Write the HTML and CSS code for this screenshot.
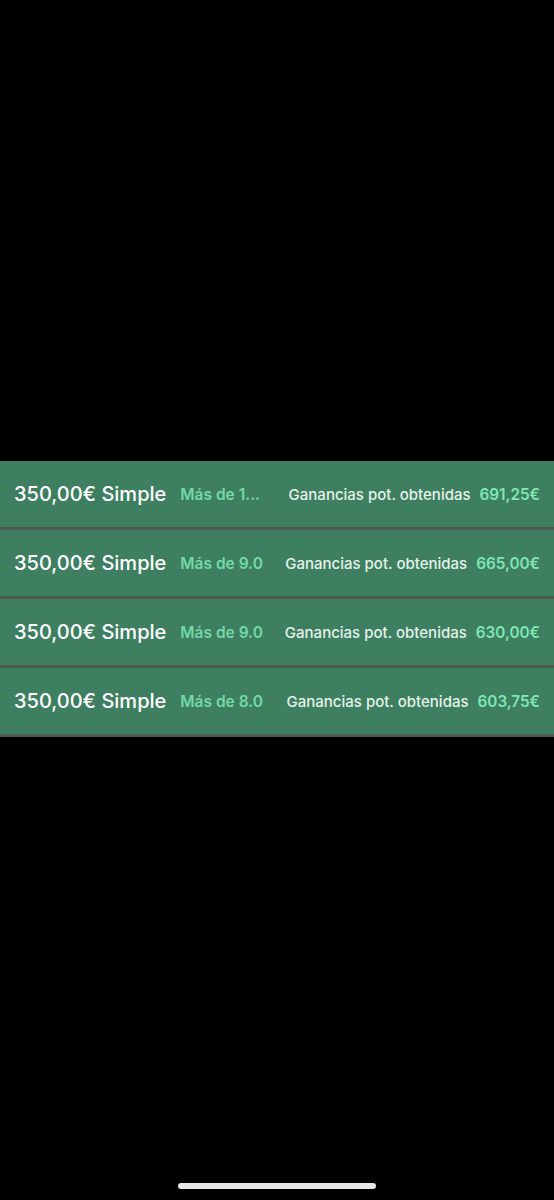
FILE: index.html
```html
<!DOCTYPE html>
<html>
<head>
<meta charset="utf-8">
<link rel="stylesheet" href="styles.css">
</head>
<body>
<div class="screen">
  <div class="list">
    <div class="row">
      <div class="left"><span class="stake">350,00€ Simple</span><span class="sel">Más de 1...</span></div>
      <div class="right"><span class="label">Ganancias pot. obtenidas</span><span class="val">691,25€</span></div>
    </div>
    <div class="row">
      <div class="left"><span class="stake">350,00€ Simple</span><span class="sel">Más de 9.0</span></div>
      <div class="right"><span class="label">Ganancias pot. obtenidas</span><span class="val">665,00€</span></div>
    </div>
    <div class="row">
      <div class="left"><span class="stake">350,00€ Simple</span><span class="sel">Más de 9.0</span></div>
      <div class="right"><span class="label">Ganancias pot. obtenidas</span><span class="val">630,00€</span></div>
    </div>
    <div class="row">
      <div class="left"><span class="stake">350,00€ Simple</span><span class="sel">Más de 8.0</span></div>
      <div class="right"><span class="label">Ganancias pot. obtenidas</span><span class="val">603,75€</span></div>
    </div>
  </div>
  <div class="home"></div>
</div>
</body>
</html>
```
FILE: styles.css
```css
html, body {
  margin: 0;
  padding: 0;
  background: #000;
}
.screen {
  width: 554px;
  height: 1200px;
  background: #000;
  display: flex;
  flex-direction: column;
  font-family: Inter, "Noto Sans", "Liberation Sans", sans-serif;
}
.list {
  margin-top: 461px;
  display: flex;
  flex-direction: column;
}
.row {
  height: 66px;
  background: #3d7f60;
  border-bottom: 3px solid #4a5a53;
  display: flex;
  align-items: center;
  justify-content: space-between;
  padding: 0 14px;
}
.left, .right {
  display: flex;
  align-items: center;
}
.stake {
  color: #ffffff;
  font-size: 20px;
  font-weight: 500;
  letter-spacing: 0;
}
.sel {
  color: #74d9a6;
  font-size: 15.5px;
  font-weight: 600;
  margin-left: 14px;
}
.label {
  color: #e4f2ea;
  font-size: 15px;
  font-weight: 500;
}
.val {
  color: #7fe6b4;
  font-size: 15.3px;
  font-weight: 600;
  margin-left: 9px;
}
.home {
  margin-top: auto;
  margin-bottom: 11px;
  align-self: center;
  width: 198px;
  height: 6px;
  border-radius: 3px;
  background: #e6e6e6;
}
```
